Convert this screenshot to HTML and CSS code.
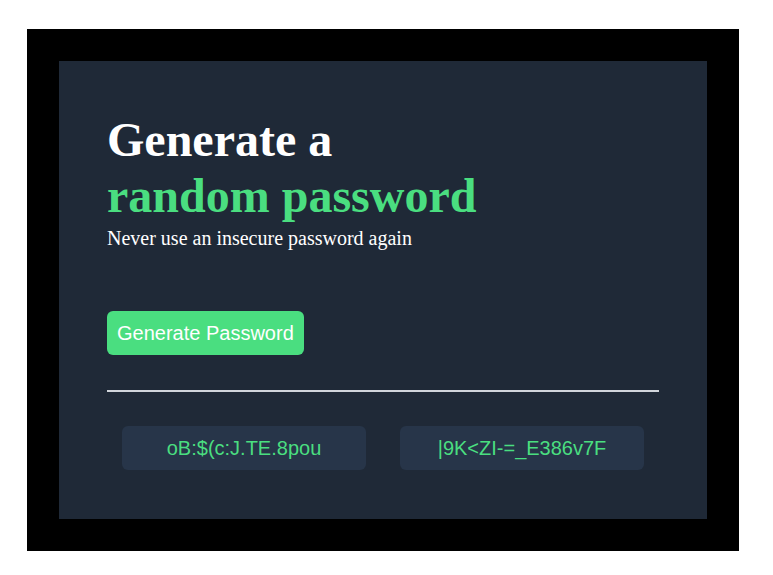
FILE: index.html
```html
<!DOCTYPE html>
<html>
<head>
<meta charset="utf-8">
<link rel="stylesheet" href="styles.css">
</head>
<body>
<div class="frame">
  <main class="panel">
    <h1 class="title">Generate a<br><span class="accent">random password</span></h1>
    <p class="subtitle">Never use an insecure password again</p>
    <button class="gen-btn">Generate Password</button>
    <hr class="divider">
    <div class="results">
      <div class="pw">oB:$(c:J.TE.8pou</div>
      <div class="pw">|9K&lt;ZI-=_E386v7F</div>
    </div>
  </main>
</div>
</body>
</html>
```
FILE: styles.css
```css
html, body { margin: 0; padding: 0; background: #ffffff; }
body { padding: 29px 34px 24px 27px; }
.frame {
  width: 712px;
  height: 522px;
  box-sizing: border-box;
  background: #000;
  padding: 32px;
}
.panel {
  background: #1f2937;
  height: 458px;
  box-sizing: border-box;
  padding: 51px 48px 0 48px;
  font-family: "Liberation Serif", "Times New Roman", serif;
  color: #fff;
}
.title {
  margin: 0;
  font-size: 48px;
  line-height: 56px;
  font-weight: 700;
}
.accent { color: #4ade80; }
.subtitle {
  margin: 0;
  font-size: 20px;
  line-height: 28px;
}
.gen-btn {
  margin-top: 59px;
  display: block;
  height: 44px;
  padding: 0 10px;
  border: none;
  border-radius: 6px;
  background: #4ade80;
  color: #fff;
  font-family: "Liberation Sans", Arial, sans-serif;
  font-size: 20px;
}
.divider {
  margin: 35px 0 0 0;
  border: none;
  height: 2px;
  background: #d1d5db;
}
.results {
  display: flex;
  gap: 34px;
  padding: 0 15px;
  margin-top: 34px;
}
.pw {
  width: 244px;
  height: 44px;
  border-radius: 6px;
  background: #273549;
  color: #4ade80;
  font-family: "Liberation Sans", Arial, sans-serif;
  font-size: 20px;
  display: flex;
  align-items: center;
  justify-content: center;
}
```
